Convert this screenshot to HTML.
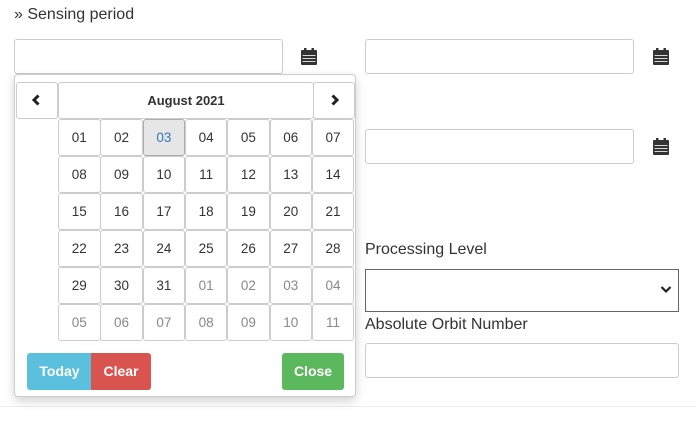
<!DOCTYPE html>
<html><head><style>
*{box-sizing:border-box;margin:0;padding:0}
body{width:696px;height:422px;background:#fff;position:relative;overflow:hidden;font-family:"Liberation Sans",sans-serif;color:#333}
.a{position:absolute}
.inp{position:absolute;border:1px solid #ccc;border-radius:3px;background:#fff}
.lbl{position:absolute;font-size:16px;color:#333}
.cal{position:absolute;width:16px;height:17px}
.pop{position:absolute;left:14px;top:74px;width:342px;height:323px;background:#fff;border:1px solid #ccc;border-radius:4px;box-shadow:0 4px 10px rgba(0,0,0,.18)}
.c{position:absolute;border:1px solid #ccc;border-radius:3px;background:#fff;font-size:13.5px;text-align:center;line-height:35px;color:#333}
.o{color:#888}
.btn{position:absolute;top:353px;height:37px;color:#fff;font-size:14px;font-weight:bold;text-align:center;line-height:37px}
</style></head><body>
<div class="lbl" style="left:14px;top:6px;font-size:16px">» Sensing period</div>
<div class="inp" style="left:14px;top:39px;width:269px;height:35px"></div>
<div class="inp" style="left:365px;top:39px;width:269px;height:35px"></div>
<div class="inp" style="left:365px;top:129px;width:269px;height:35px"></div>
<svg class="cal" style="left:301px;top:48px" viewBox="0 0 16 17"><rect x="0" y="2" width="16" height="15" rx="1" fill="#333"/><rect x="3" y="0" width="2.5" height="4" fill="#333"/><rect x="10.5" y="0" width="2.5" height="4" fill="#333"/><g fill="#fff"><rect x="1.5" y="7" width="13" height="0.8"/><rect x="1.5" y="10" width="13" height="0.8"/><rect x="1.5" y="13" width="13" height="0.8"/></g></svg>
<svg class="cal" style="left:653px;top:48px" viewBox="0 0 16 17"><rect x="0" y="2" width="16" height="15" rx="1" fill="#333"/><rect x="3" y="0" width="2.5" height="4" fill="#333"/><rect x="10.5" y="0" width="2.5" height="4" fill="#333"/><g fill="#fff"><rect x="1.5" y="7" width="13" height="0.8"/><rect x="1.5" y="10" width="13" height="0.8"/><rect x="1.5" y="13" width="13" height="0.8"/></g></svg>
<svg class="cal" style="left:653px;top:138px" viewBox="0 0 16 17"><rect x="0" y="2" width="16" height="15" rx="1" fill="#333"/><rect x="3" y="0" width="2.5" height="4" fill="#333"/><rect x="10.5" y="0" width="2.5" height="4" fill="#333"/><g fill="#fff"><rect x="1.5" y="7" width="13" height="0.8"/><rect x="1.5" y="10" width="13" height="0.8"/><rect x="1.5" y="13" width="13" height="0.8"/></g></svg>
<div class="lbl" style="left:365px;top:241px">Processing Level</div>
<div class="a" style="left:365px;top:269px;width:314px;height:43px;border:1px solid #666;background:#fff"></div>
<svg class="a" style="left:660px;top:285px" width="12" height="9" viewBox="0 0 12 9"><path d="M1.5 2 L6 6.5 L10.5 2" stroke="#222" stroke-width="2.2" fill="none"/></svg>
<div class="lbl" style="left:365px;top:316px">Absolute Orbit Number</div>
<div class="inp" style="left:365px;top:343px;width:314px;height:35px"></div>
<div class="a" style="left:0;top:406px;width:696px;height:1px;background:#eee"></div>
<div class="a" style="left:14px;top:130px;width:2px;height:30px;background:#444"></div>
<div class="a" style="left:14px;top:268px;width:2px;height:43px;background:#444"></div>
<div class="a" style="left:14px;top:343px;width:2px;height:42px;background:#444"></div>
<div class="pop"></div>
<div class="c" style="left:16px;top:82px;width:42px;height:37px"></div>
<svg class="a" style="left:31px;top:94px" width="10" height="12" viewBox="0 0 10 12"><path d="M7.5 1.5 L3 6 L7.5 10.5" stroke="#222" stroke-width="3" fill="none"/></svg>
<div class="c" style="left:58px;top:82px;width:256px;height:37px;font-weight:bold;font-size:13px">August 2021</div>
<div class="c" style="left:313px;top:82px;width:42px;height:37px"></div>
<svg class="a" style="left:330px;top:94px" width="10" height="12" viewBox="0 0 10 12"><path d="M2.5 1.5 L7 6 L2.5 10.5" stroke="#222" stroke-width="3" fill="none"/></svg>
<div id="g"></div>
<div class="btn" style="left:27px;width:65px;background:#5bc0de;border-radius:3px 0 0 3px">Today</div>
<div class="btn" style="left:91px;width:60px;background:#d9534f;border-radius:0 3px 3px 0">Clear</div>
<div class="btn" style="left:282px;width:62px;background:#5cb85c;border-radius:3px">Close</div>
<script>
var d=["01","02","03","04","05","06","07","08","09","10","11","12","13","14","15","16","17","18","19","20","21","22","23","24","25","26","27","28","29","30","31","01","02","03","04","05","06","07","08","09","10","11"];
var h="";
for(var i=0;i<42;i++){var r=Math.floor(i/7),c=i%7;var x=58+c*42.3,y=119+r*37;
var st="left:"+x+"px;top:"+y+"px;width:42.5px;height:37px;";var cl="c";
if(i>=31)cl+=" o";
if(i==2)st+="background:#e6e6e6;border-color:#adadad;color:#337ab7;";
h+='<div class="'+cl+'" style="'+st+'">'+d[i]+'</div>';}
document.getElementById("g").innerHTML=h;
</script>
</body></html>
